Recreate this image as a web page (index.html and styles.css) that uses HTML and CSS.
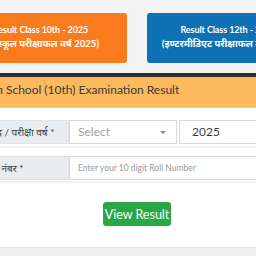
FILE: index.html
```html
<!DOCTYPE html>
<html lang="hi">
<head>
<meta charset="utf-8">
<link rel="stylesheet" href="styles.css">
</head>
<body>
<div class="page">
  <div class="top">
    <div class="tabs">
      <a class="tab tab-orange"><span class="tab-en">Result Class 10th - 2025</span><span class="tab-hi">(हाईस्कूल परीक्षाफल वर्ष 2025)</span></a>
      <a class="tab tab-blue"><span class="tab-en">Result Class 12th - 2025</span><span class="tab-hi">(इण्टरमीडिएट परीक्षाफल वर्ष 2025)</span></a>
    </div>
  </div>
  <div class="bar"></div>
  <div class="title">High School (10th) Examination Result</div>
  <div class="panel">
    <div class="row-wrap first">
      <div class="row">
        <div class="label label-year">परिषद / परीक्षा वर्ष *</div>
        <div class="select">Select<span class="caret"></span></div>
        <div class="input input-year">2025</div>
      </div>
    </div>
    <div class="row-wrap second">
      <div class="row">
        <div class="label label-roll">रोल नंबर *</div>
        <div class="input input-roll">Enter your 10 digit Roll Number</div>
      </div>
    </div>
    <div class="actions">
      <button class="btn">View Result</button>
    </div>
  </div>
  <div class="footer"></div>
</div>
</body>
</html>
```

FILE: styles.css
```css
* { box-sizing: border-box; }
html, body { margin: 0; padding: 0; }
body {
  background: #efefef;
  font-family: Lato, "Noto Sans", sans-serif;
  overflow: hidden;
  width: 256px;
  height: 256px;
}
.page {
  margin-left: -40px;
  width: 360px;
}
.top {
  background: #f4f4f4;
  height: 73px;
  padding-top: 13px;
}
.tabs {
  display: flex;
  gap: 20px;
}
.tab {
  display: flex;
  flex-direction: column;
  justify-content: center;
  align-items: center;
  width: 167px;
  height: 50px;
  border-radius: 3px;
  color: #fff;
  font-weight: 700;
  line-height: 14px;
  text-align: center;
  white-space: nowrap;
  padding-bottom: 2px;
}
.tab-en { font-size: 9px; letter-spacing: -0.1px; }
.tab-hi { font-size: 9.6px; }
.tab-orange { background: #fa7b1c; padding-right: 6px; }
.tab-blue { background: #0f71b5; padding-right: 5px; }
.bar {
  height: 4px;
  background: #2f2f2f;
}
.title {
  height: 31px;
  background: #fdb95e;
  color: #3a3a3a;
  font-size: 12px;
  line-height: 25px;
  padding-left: 18px;
  white-space: nowrap;
  border-bottom: 1px solid #efc896;
}
.panel {
  background: #fff;
  height: 139px;
}
.row-wrap {
  border-bottom: 2px solid #f2f2f2;
}
.row-wrap.first { padding: 12px 0 2px; }
.row-wrap.second { padding: 8px 0 1px; }
.row {
  display: flex;
  height: 24px;
}
.label {
  width: 109px;
  background: #e9ecef;
  border: 1px solid #e1e4e7;
  color: #3f3f3f;
  font-size: 10px;
  line-height: 22px;
  text-align: center;
  white-space: nowrap;
  overflow: hidden;
}
.label-year { padding-left: 4px; }
.label-roll { padding-right: 20px; }
.select {
  position: relative;
  width: 108px;
  border: 1px solid #d6d9dc;
  color: #a0a0a0;
  font-size: 12px;
  line-height: 22px;
  padding-left: 8px;
  margin-right: 2px;
}
.caret {
  position: absolute;
  right: 10px;
  top: 10px;
  border-left: 3px solid transparent;
  border-right: 3px solid transparent;
  border-top: 3px solid #888;
}
.input {
  border: 1px solid #d6d9dc;
  line-height: 22px;
  flex: 1;
}
.input-year {
  color: #3a3a3a;
  font-size: 12px;
  padding-left: 12px;
}
.input-roll {
  color: #9a9a9a;
  font-size: 8.5px;
  padding-left: 8px;
}
.actions {
  display: flex;
  padding-left: 143px;
  padding-top: 19px;
}
.btn {
  width: 68px;
  height: 24px;
  background: #27a844;
  border: none;
  border-radius: 3px;
  color: #fff;
  font-family: Lato, sans-serif;
  font-size: 12.5px;
  padding: 0;
}
.footer {
  height: 20px;
  background: #efefef;
  border-top: 1px solid #e2e2e2;
}
```
